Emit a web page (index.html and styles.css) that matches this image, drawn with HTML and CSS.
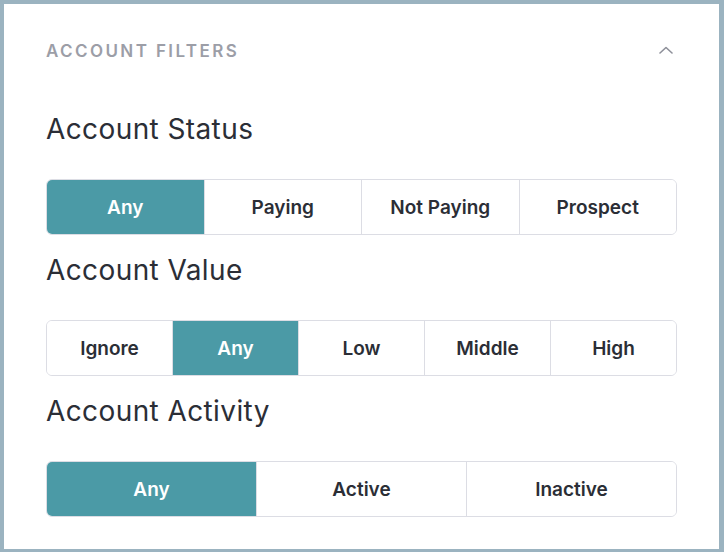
FILE: index.html
```html
<!DOCTYPE html>
<html lang="en">
<head>
<meta charset="utf-8">
<title>Account Filters</title>
<link rel="stylesheet" href="styles.css">
</head>
<body>
<div class="panel">
  <div class="header">
    <span class="title">ACCOUNT FILTERS</span>
    <svg class="chevron" width="14" height="8" viewBox="0 0 14 8"><path d="M1 7 L7 1.5 L13 7" fill="none" stroke="#8e909a" stroke-width="1.6" stroke-linecap="round" stroke-linejoin="round"/></svg>
  </div>
  <section class="filter">
    <h2 class="label">Account Status</h2>
    <div class="group">
      <button class="opt active">Any</button>
      <button class="opt">Paying</button>
      <button class="opt">Not Paying</button>
      <button class="opt">Prospect</button>
    </div>
  </section>
  <section class="filter">
    <h2 class="label">Account Value</h2>
    <div class="group">
      <button class="opt">Ignore</button>
      <button class="opt active">Any</button>
      <button class="opt">Low</button>
      <button class="opt">Middle</button>
      <button class="opt">High</button>
    </div>
  </section>
  <section class="filter">
    <h2 class="label">Account Activity</h2>
    <div class="group">
      <button class="opt active">Any</button>
      <button class="opt">Active</button>
      <button class="opt">Inactive</button>
    </div>
  </section>
</div>
</body>
</html>
```
FILE: styles.css
```css
html, body {
  margin: 0;
  padding: 0;
}
body {
  background: #9bb3c0;
  width: 724px;
  height: 552px;
  padding: 4px 5px 3px 4px;
  box-sizing: border-box;
  font-family: Inter, "Noto Sans", sans-serif;
}
.panel {
  background: #ffffff;
  height: 100%;
  box-sizing: border-box;
  padding: 27px 42px 0 42px;
}
.header {
  display: flex;
  align-items: center;
  justify-content: space-between;
  height: 40px;
}
.title {
  font-size: 17px;
  font-weight: 600;
  letter-spacing: 2.4px;
  color: #9c9ea7;
  line-height: 24px;
}
.chevron {
  margin-right: 4px;
  margin-bottom: 2px;
  display: block;
}
.filter {
  display: flex;
  flex-direction: column;
}
.label {
  margin: 0;
  font-size: 28px;
  font-weight: 400;
  letter-spacing: 0.4px;
  line-height: 32px;
  color: #2b2e36;
}
.filter + .filter .label {
  margin-top: 19px;
}
.header + .filter .label {
  margin-top: 42px;
}
.group {
  display: flex;
  margin-top: 34px;
  height: 56px;
  border: 1px solid #dcdde4;
  border-radius: 6px;
  overflow: hidden;
  box-sizing: border-box;
}
.opt {
  flex: 1 1 0;
  margin: 0;
  border: 0;
  border-left: 1px solid #dcdde4;
  background: #ffffff;
  font-family: inherit;
  font-size: 19px;
  font-weight: 600;
  color: #2b2e36;
  padding: 0;
}
.opt:first-child {
  border-left: 0;
}
.opt.active {
  background: #4b9aa6;
  color: #ffffff;
}
```
